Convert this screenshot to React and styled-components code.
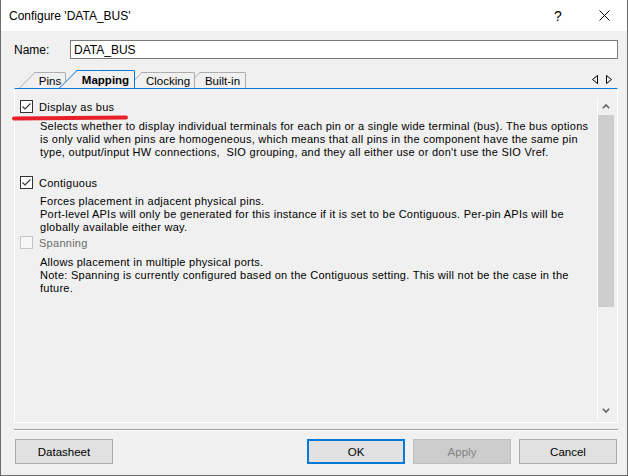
import React from "react";
import styled, { createGlobalStyle } from "styled-components";

const Global = createGlobalStyle`
  html, body { margin: 0; padding: 0; background: #3c3c3c; }
  #root { width: 628px; height: 476px; }
`;

const ui = `"Liberation Sans", Arial, sans-serif`;

const Window = styled.div`
  width: 628px;
  height: 476px;
  box-sizing: border-box;
  border: 1px solid #6b6b6b;
  border-top: none;
  background: #f0f0f0;
  display: flex;
  flex-direction: column;
  font-family: ${ui};
  color: #000;
`;

const TitleBar = styled.div`
  height: 31px;
  flex: none;
  background: #fff;
  display: flex;
  align-items: center;
  padding-left: 8px;
  font-size: 12px;
`;

const Title = styled.div`
  flex: 1;
  margin-top: 1px;
`;

const TitleButton = styled.div`
  width: 46px;
  height: 31px;
  display: flex;
  align-items: center;
  justify-content: center;
  font-size: 14px;
`;

const Body = styled.div`
  flex: 1;
  display: flex;
  flex-direction: column;
  padding: 0 9px 0 13px;
`;

const NameRow = styled.div`
  margin-top: 9px;
  height: 19px;
  display: flex;
  align-items: center;
  font-size: 12px;
`;

const Label = styled.div`
  width: 56px;
`;

const Input = styled.div`
  flex: 1;
  height: 19px;
  box-sizing: border-box;
  border: 1px solid #7a7a7a;
  background: #fff;
  display: flex;
  align-items: center;
  padding-left: 3px;
  font-size: 12px;
`;

const TabStrip = styled.div`
  margin-top: 11px;
  height: 18px;
  display: flex;
  align-items: flex-end;
  padding-left: 21px;
`;

const Tab = styled.div`
  position: relative;
  z-index: ${(p) => (p.$active ? 10 : p.$z)};
  width: ${(p) => p.$w}px;
  height: ${(p) => (p.$active ? 18 : 16)}px;
  margin-left: ${(p) => p.$ml}px;
  box-sizing: border-box;
  display: flex;
  align-items: center;
  justify-content: center;
  background: #f0f0f0;
  border-top: 1px solid ${(p) => (p.$active ? "#0078d7" : "#acacac")};
  border-right: 1px solid ${(p) => (p.$active ? "#0078d7" : "#acacac")};
  border-top-right-radius: 2px;
  font-size: 11.5px;
  font-weight: ${(p) => (p.$active ? 700 : 400)};
  padding-top: 1px;

  &::before {
    content: "";
    position: absolute;
    top: -1px;
    bottom: 0;
    left: -${(p) => (p.$active ? 18 : 16)}px;
    width: ${(p) => (p.$active ? 20 : 18)}px;
    background: #f0f0f0;
    border-left: 1px solid ${(p) => (p.$active ? "#0078d7" : "#acacac")};
    border-top: 1px solid ${(p) => (p.$active ? "#0078d7" : "#acacac")};
    transform-origin: bottom left;
    transform: skewX(-45deg);
    z-index: -1;
  }
`;

const TabArrows = styled.div`
  margin-left: auto;
  margin-right: 6px;
  align-self: center;
  display: flex;
  gap: 8px;
`;

const Panel = styled.div`
  position: relative;
  height: 335px;
  box-sizing: border-box;
  border-top: 1px solid #0078d7;
  border-left: 1px solid #fff;
  border-right: 1px solid #fff;
  border-bottom: 1px solid #fff;
  display: flex;
`;

const Content = styled.div`
  flex: 1;
  display: flex;
  flex-direction: column;
  padding: 11px 0 0 5px;
  font-size: 11px;
  letter-spacing: 0.27px;
`;

const CheckRow = styled.div`
  height: 13px;
  display: flex;
  align-items: center;
  margin-top: ${(p) => p.$mt || 0}px;
  color: ${(p) => (p.$disabled ? "#6d6d6d" : "#000")};
`;

const Box = styled.div`
  width: 13px;
  height: 13px;
  box-sizing: border-box;
  border: 1px solid ${(p) => (p.$disabled ? "#c6c6c6" : "#333")};
  background: ${(p) => (p.$disabled ? "#f7f7f7" : "#fff")};
  margin-right: 6px;
  display: flex;
  align-items: center;
  justify-content: center;
`;

const Desc = styled.div`
  margin-top: ${(p) => p.$mt}px;
  padding-left: 20px;
  line-height: 13px;
  white-space: pre;
`;

const Underline = styled.div`
  position: absolute;
  left: -3px;
  top: 27px;
  width: 116px;
  height: 4px;
  border-radius: 2px;
  background: #e8202a;
  transform: rotate(-0.6deg);
`;

const ScrollBar = styled.div`
  width: 16px;
  margin: 9px 3px 3px 0;
  border-left: 1px solid #fff;
  display: flex;
  flex-direction: column;
`;

const ScrollArrow = styled.div`
  height: 17px;
  display: flex;
  align-items: center;
  justify-content: center;
`;

const Thumb = styled.div`
  height: 192px;
  background: #cdcdcd;
`;

const Track = styled.div`
  flex: 1;
`;

const Separator = styled.div`
  margin-top: 6px;
  height: 0;
  border-top: 1px solid #a0a0a0;
  border-bottom: 1px solid #fff;
`;

const ButtonRow = styled.div`
  margin-top: 8px;
  display: flex;
  padding-left: 1px;
`;

const Button = styled.div`
  width: ${(p) => p.$w || 98}px;
  height: 25px;
  box-sizing: border-box;
  margin-left: ${(p) => p.$ml || 0}px;
  border: ${(p) => (p.$default ? "2px solid #0078d7" : `1px solid ${p.$disabled ? "#bfbfbf" : "#adadad"}`)};
  background: ${(p) => (p.$disabled ? "#cccccc" : "#e1e1e1")};
  color: ${(p) => (p.$disabled ? "#838383" : "#000")};
  display: flex;
  align-items: center;
  justify-content: center;
  font-size: 11.5px;
`;

const Check = () => (
  <svg width="11" height="11" viewBox="0 0 11 11">
    <polyline points="1.5,5.5 4,8 9.5,2.5" fill="none" stroke="#3a3a3a" strokeWidth="1.2" />
  </svg>
);

const Chevron = ({ down }) => (
  <svg width="8" height="5" viewBox="0 0 8 5">
    <polyline
      points={down ? "0.8,0.8 4,4 7.2,0.8" : "0.8,4.2 4,1 7.2,4.2"}
      fill="none"
      stroke="#606060"
      strokeWidth="1.6"
    />
  </svg>
);

const Triangle = ({ left }) => (
  <svg width="6" height="9" viewBox="0 0 6 9">
    <polygon
      points={left ? "5.5,0.5 0.5,4.5 5.5,8.5" : "0.5,0.5 5.5,4.5 0.5,8.5"}
      fill="none"
      stroke="#000"
      strokeWidth="1"
    />
  </svg>
);

const tabs = [
  { label: "Pins", w: 31, ml: 0 },
  { label: "Mapping", w: 58, ml: 11, active: true },
  { label: "Clocking", w: 53, ml: 7 },
  { label: "Built-in", w: 46, ml: 5 },
];

export default function App() {
  return (
    <>
      <Global />
      <Window>
        <TitleBar>
          <Title>Configure 'DATA_BUS'</Title>
          <TitleButton>?</TitleButton>
          <TitleButton>
            <svg width="11" height="11" viewBox="0 0 11 11">
              <path d="M0.5 0.5 L10.5 10.5 M10.5 0.5 L0.5 10.5" stroke="#000" strokeWidth="1" />
            </svg>
          </TitleButton>
        </TitleBar>
        <Body>
          <NameRow>
            <Label>Name:</Label>
            <Input>DATA_BUS</Input>
          </NameRow>
          <TabStrip>
            {tabs.map((t, i) => (
              <Tab key={t.label} $w={t.w} $ml={t.ml} $active={t.active} $z={tabs.length - i}>
                {t.label}
              </Tab>
            ))}
            <TabArrows>
              <Triangle left />
              <Triangle />
            </TabArrows>
          </TabStrip>
          <Panel>
            <Underline />
            <Content>
              <CheckRow>
                <Box><Check /></Box>
                Display as bus
              </CheckRow>
              <Desc $mt={7}>
                {"Selects whether to display individual terminals for each pin or a single wide terminal (bus). The bus options\nis only valid when pins are homogeneous, which means that all pins in the component have the same pin\ntype, output/input HW connections,  SIO grouping, and they all either use or don't use the SIO Vref."}
              </Desc>
              <CheckRow $mt={17}>
                <Box><Check /></Box>
                Contiguous
              </CheckRow>
              <Desc $mt={6}>
                {"Forces placement in adjacent physical pins.\nPort-level APIs will only be generated for this instance if it is set to be Contiguous. Per-pin APIs will be\nglobally available either way."}
              </Desc>
              <CheckRow $mt={2} $disabled>
                <Box $disabled />
                Spanning
              </CheckRow>
              <Desc $mt={7}>
                {"Allows placement in multiple physical ports.\nNote: Spanning is currently configured based on the Contiguous setting. This will not be the case in the\nfuture."}
              </Desc>
            </Content>
            <ScrollBar>
              <ScrollArrow><Chevron /></ScrollArrow>
              <Thumb />
              <Track />
              <ScrollArrow><Chevron down /></ScrollArrow>
            </ScrollBar>
          </Panel>
          <Separator />
          <ButtonRow>
            <Button>Datasheet</Button>
            <Button $ml={194} $default>OK</Button>
            <Button $ml={8} $disabled>Apply</Button>
            <Button $ml={8}>Cancel</Button>
          </ButtonRow>
        </Body>
      </Window>
    </>
  );
}
